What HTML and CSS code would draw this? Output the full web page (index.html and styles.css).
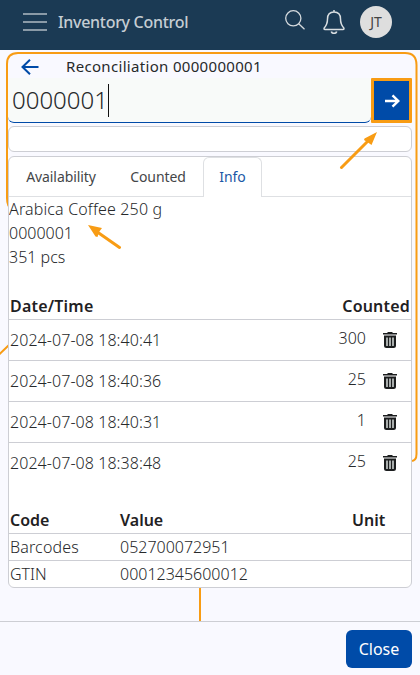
FILE: index.html
```html
<!DOCTYPE html>
<html lang="en">
<head>
<meta charset="utf-8">
<title>Inventory Control</title>
<link rel="stylesheet" href="styles.css">
</head>
<body>
<div class="app">
  <svg class="guides" viewBox="0 0 420 675" fill="none" stroke="#f89c14" stroke-width="2">
    <path d="M12 209Q7 207 7 198V64Q7 53 18 53H405Q416.500 53 416.500 65V454Q416.500 461 411 461M-1 354.500L9 345M200 580V621"/>
  </svg>
  <header class="topbar">
    <svg class="menu" viewBox="0 0 24 18" stroke="#b0bac2" stroke-width="1.500"><path d="M0 1H24M0 9H24M0 17H24"/></svg>
    <h1 class="brand">Inventory Control</h1>
    <svg class="search" viewBox="0 0 20 20" fill="none" stroke="#d5dade" stroke-width="1.300"><circle cx="8.300" cy="8.300" r="7.600"/><path d="M13.700 13.700L19.500 19.200"/></svg>
    <svg class="bell" viewBox="0 0 22 24" fill="none" stroke="#d9dee1" stroke-width="1.500"><path d="M11 0V2M11 2C6.500 2 4.500 5 4.500 9C4.500 14 3 16 1.200 18Q.6 19.500 2 19.500H20Q21.400 19.500 20.800 18C19 16 17.500 14 17.500 9C17.500 5 15.500 2 11 2Z"/><path d="M8.300 21.500Q8.800 23.300 11 23.300T13.700 21.500" stroke-width="1.700"/></svg>
    <span class="avatar">JT</span>
  </header>
  <main class="content">
    <div class="title-row">
      <svg class="back" viewBox="0 0 18 16" fill="none" stroke="#004ba8" stroke-width="2"><path d="M17.500 8H1.500M9 .8L1.500 8L9 15.200"/></svg>
      <h2 class="title">Reconciliation 0000000001</h2>
    </div>
    <div class="entry">
      <div class="field"><span>0000001</span><i class="caret"></i></div>
      <button class="submit" aria-label="Submit"><svg viewBox="0 0 16 14" fill="none" stroke="#fff" stroke-width="2.400"><path d="M1 7H14M8.500 1.300L14.300 7L8.500 12.700"/></svg></button>
    </div>
    <div class="message"></div>
    <section class="card">
      <nav class="tabs"><span class="tab availability">Availability</span><span class="tab counted">Counted</span><span class="tab active">Info</span></nav>
      <div class="item"><div class="name">Arabica Coffee 250 g</div><div>0000001</div><div>351 pcs</div></div>
      <div class="counts">
        <div class="count-head"><span>Date/Time</span><span class="total">Counted</span></div>
        <div class="count-row"><span class="date">2024-07-08 18:40:41</span><span class="qty">300</span><svg class="trash" viewBox="0 0 14 16"><use href="#trash"/></svg></div>
        <div class="count-row"><span class="date">2024-07-08 18:40:36</span><span class="qty">25</span><svg class="trash" viewBox="0 0 14 16"><use href="#trash"/></svg></div>
        <div class="count-row"><span class="date">2024-07-08 18:40:31</span><span class="qty">1</span><svg class="trash" viewBox="0 0 14 16"><use href="#trash"/></svg></div>
        <div class="count-row"><span class="date">2024-07-08 18:38:48</span><span class="qty">25</span><svg class="trash" viewBox="0 0 14 16"><use href="#trash"/></svg></div>
      </div>
      <div class="codes">
        <div class="code-row code-head"><span>Code</span><span>Value</span><span>Unit</span></div>
        <div class="code-row"><span class="code">Barcodes</span><span>052700072951</span><span></span></div>
        <div class="code-row"><span>GTIN</span><span>00012345600012</span><span></span></div>
      </div>
    </section>
  </main>
  <footer class="footer"><button class="close">Close</button></footer>
  <svg class="pointers" viewBox="0 0 420 675" stroke="#f89c14" stroke-width="3" stroke-linecap="round" fill="#f89c14">
    <path d="M341.500 167.500L368 141M119.500 247.500L98 232.500"/>
    <path stroke="none" d="M377 132L371.500 145L368 142.500L364 140L364.500 138.500ZM88 225L102 228L99 232L97.500 237L95.500 236.500Z"/>
  </svg>
  <svg class="symbols"><symbol id="trash" viewBox="0 0 14 16"><path fill="#a8adac" d="M2 4H12V15H2Z"/><path fill="none" stroke="#1b1d1e" stroke-width="2" d="M2 4.500V13.500Q2 15 3.500 15H10.500Q12 15 12 13.500V4.500Z"/><path stroke="#1b1d1e" d="M5.500 4V15M8.500 4V15"/><path fill="#1b1d1e" d="M0 1H4.500V0H9.500V1H14V2.600H0Z"/></symbol></svg>
</div>
</body>
</html>
```

FILE: styles.css
```css
* { box-sizing: border-box; }
body { margin: 0; background: #f9f9ff; color: #27292b; font: 300 16px/24px "Noto Sans", "Open Sans", sans-serif; }
.app { position: relative; width: 420px; height: 675px; display: flex; flex-direction: column; overflow: hidden; }
svg { display: block; flex: none; }
.guides, .pointers { position: absolute; inset: 0; width: 420px; height: 675px; pointer-events: none; }
.symbols { position: absolute; width: 0; height: 0; }
.topbar { height: 50px; flex: none; background: #1b3a54; display: flex; align-items: center; padding: 0 28px 6px 23px; }
.menu { width: 24px; height: 18px; }
.brand { margin: 0 auto 0 11px; color: #c5cdd3; font-size: 16px; font-weight: 500; letter-spacing: -0.3px; }
.search { width: 20px; height: 20px; margin: 0 18px 4px 0; }
.bell { width: 22px; height: 24px; margin-right: 15px; }
.avatar { width: 32px; height: 32px; border-radius: 50%; background: #dedede; color: #444; font-size: 14px; font-weight: 400; line-height: 32px; text-align: center; }
.content { position: relative; height: 571px; flex: none; padding: 0 8px; display: flex; flex-direction: column; }
.title-row { height: 28px; display: flex; align-items: center; padding: 5px 0 0 13px; }
.back { width: 18px; height: 16px; }
.title { margin: 0 0 2px 27px; font-size: 15px; line-height: 22px; font-weight: 400; letter-spacing: 0.32px; }
.entry { display: flex; height: 45px; }
.field { flex: 1; display: flex; align-items: center; padding: 0 4px; background: #f8faf9; border-bottom: 1px solid #004ba8; border-radius: 0 0 6px 6px; font-size: 24px; }
.caret { width: 1px; height: 33px; background: #111; }
.submit { width: 41px; height: 45px; padding: 0; display: flex; align-items: center; justify-content: center; background: #004ba8; border: 3px solid #f89c14; border-radius: 1px; }
.submit svg { width: 16px; height: 14px; }
.message { height: 26px; margin-top: 3px; background: #fff; border: 1px solid #cdced4; border-radius: 6px; }
.card { height: 432px; margin-top: 4px; background: #fff; border: 1px solid #cdced4; border-radius: 6px; overflow: hidden; }
.tabs { height: 40px; display: flex; border-bottom: 1px solid #dee0e3; font-size: 14px; font-weight: 400; line-height: 40px; letter-spacing: -0.08px; }
.tab { text-align: center; color: #444648; }
.availability { width: 104px; }
.counted { width: 90px; }
.active { width: 59px; height: 40px; background: #fff; border: 1px solid #dee0e3; border-bottom: 0; border-radius: 6px 6px 0 0; color: #1b57a6; line-height: 38px; }
.item { height: 96px; }
.name { letter-spacing: 0.15px; }
.count-head { height: 27px; display: flex; justify-content: space-between; padding: 0 1px; border-bottom: 1px solid #cdced4; font-weight: 600; color: #1f2123; line-height: 26px; letter-spacing: 0.2px; }
.count-row { height: 41px; display: flex; align-items: center; padding: 0 14px 0 1px; border-bottom: 1px solid #cdced4; }
.count-row:last-child { border-color: transparent; }
.date { letter-spacing: 0.06px; }
.qty { margin: 0 17px 4px auto; }
.trash { width: 14px; height: 16px; }
.codes { margin-top: 23px; }
.code-row { height: 27px; display: grid; grid-template-columns: 110px 232px 1fr; padding-left: 1px; line-height: 26px; border-bottom: 1px solid #cdced4; }
.code-row:last-child { border-bottom: 0; }
.code-head { font-weight: 600; color: #1f2123; }
.code { letter-spacing: 0.15px; }
.footer { height: 54px; position: relative; display: flex; justify-content: flex-end; align-items: flex-start; padding: 8px 8px 0; border-top: 1px solid #cdced4; background: #f9f9ff; }
.close { width: 66px; height: 38px; padding: 0; border: 0; border-radius: 6px; background: #004ba8; color: #fff; font: 400 16px/38px "Noto Sans", sans-serif; }
```
